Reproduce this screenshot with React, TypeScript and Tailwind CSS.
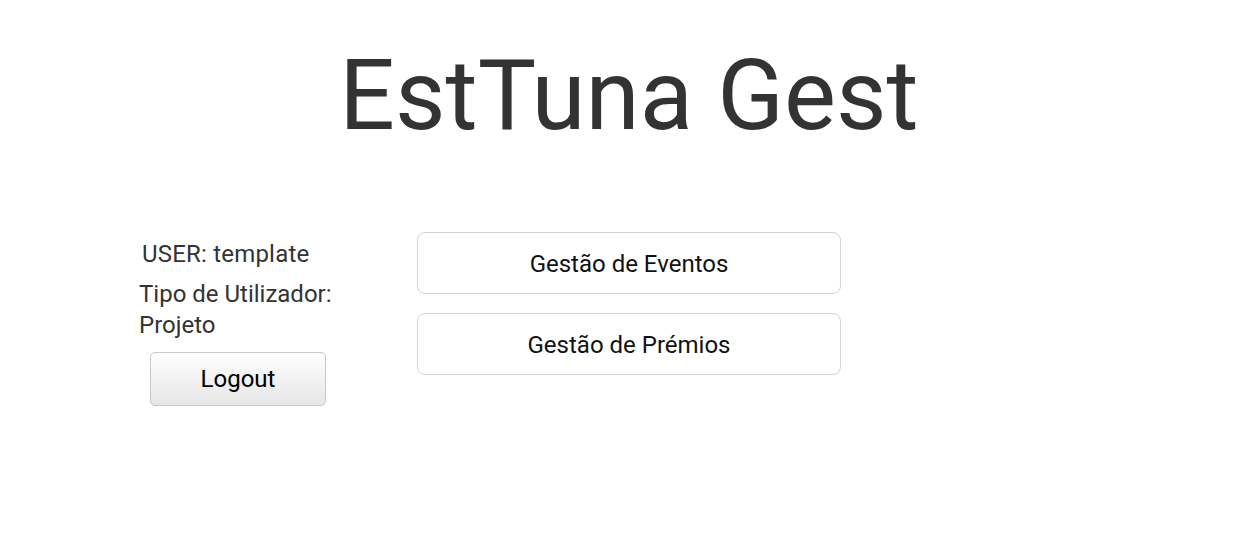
export default function App() {
  return (
    <div className="min-h-[553px] w-full bg-white font-['Roboto',sans-serif]">
      <h1 className="pl-[12px] pt-[42px] text-center text-[98px] font-normal leading-[108px] text-[#333]">
        EstTuna Gest
      </h1>

      <div className="mt-[82px] flex items-start pl-[139px]">
        <div className="flex w-[278px] flex-col text-[24px] text-[#333]">
          <p className="ml-[3px] mt-[7px] leading-[30px] tracking-[0.2px]">USER: template</p>
          <p className="mt-[10px] w-[200px] leading-[31px]">Tipo de Utilizador: Projeto</p>
          <button className="ml-[11px] mt-[11px] h-[54px] w-[176px] rounded-[5px] border border-[#c8c8c8] bg-gradient-to-b from-white to-[#e6e6e6] text-[24px] text-black">
            Logout
          </button>
        </div>

        <div className="flex w-[424px] flex-col gap-[19px]">
          <button className="h-[62px] w-full rounded-[8px] border border-[#d4d4d4] bg-white pt-[2px] text-[24px] text-[#111]">
            Gestão de Eventos
          </button>
          <button className="h-[62px] w-full rounded-[8px] border border-[#d4d4d4] bg-white pt-[2px] text-[24px] text-[#111]">
            Gestão de Prémios
          </button>
        </div>
      </div>
    </div>
  )
}
